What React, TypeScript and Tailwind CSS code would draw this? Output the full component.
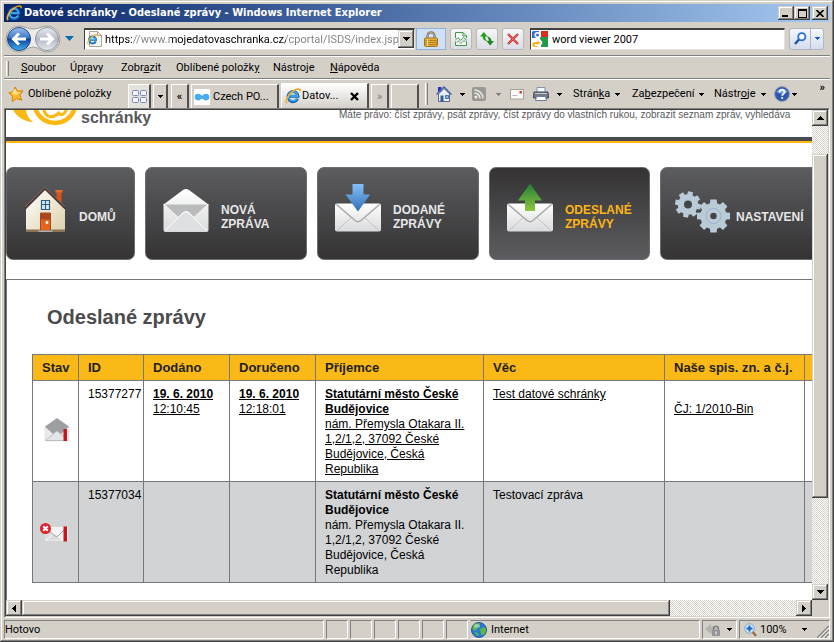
import React from "react";

const UI = "font-[Roboto,Tahoma,sans-serif] text-[11px] leading-[14px] text-black";
const RAISED =
  "bg-[#d4d0c8] shadow-[inset_-1px_-1px_#404040,inset_1px_1px_#d4d0c8,inset_-2px_-2px_#808080,inset_2px_2px_#fff]";
const TRACK =
  "bg-[repeating-conic-gradient(#fff_0_25%,#d4d0c8_0_50%)] bg-[length:2px_2px]";
const SUNKEN = "border border-t-[#808080] border-l-[#808080] border-r-white border-b-white";

/* ---------- icons ---------- */

function IeLogo({ className }: { className: string }) {
  return (
    <svg viewBox="0 0 16 16" className={className} aria-hidden="true">
      <path d="M12.6 10.6A5 5 0 1 1 13 8.3H4.6" fill="none" stroke="#1560b8" strokeWidth="3" />
      <path d="M12.2 10.4A4.6 4.6 0 1 1 12.7 8H5" fill="none" stroke="#43b4f0" strokeWidth="1.4" />
      <path d="M2.2 15.2C-.8 13 3.500 5.500 9 2.400 12.500.400 15.400.300 15.300 3.200" fill="none" stroke="#e8a010" strokeWidth="1.500" />
      <path d="M2 14.600C.500 12 4.500 5.800 9 3" fill="none" stroke="#ffe173" strokeWidth=".7" />
    </svg>
  );
}

function Caret({ color = "#000" }: { color?: string }) {
  return (
    <svg viewBox="0 0 5 3" className="h-[3px] w-[5px] shrink-0" aria-hidden="true" shapeRendering="crispEdges">
      <path d="M0 0h5v1H0zM1 1h3v1H1zM2 2h1v1H2z" fill={color} />
    </svg>
  );
}

function Arrow({ dir }: { dir: "up" | "down" | "left" | "right" }) {
  const d = {
    up: "M3 0h1v1h1v1h1v1h1v1H0V3h1V2h1V1h1z",
    down: "M0 0h7v1H6v1H5v1H4v1H3V3H2V2H1V1H0z",
    left: "M4 0v7H3V6H2V5H1V4H0V3h1V2h1V1h1V0z",
    right: "M0 0v7h1V6h1V5h1V4h1V3H3V2H2V1H1V0z",
  }[dir];
  const wide = dir === "up" || dir === "down";
  return (
    <svg
      viewBox={wide ? "0 0 7 4" : "0 0 4 7"}
      className={wide ? "h-[4px] w-[7px]" : "h-[7px] w-[4px]"}
      shapeRendering="crispEdges"
      aria-hidden="true"
    >
      <path d={d} />
    </svg>
  );
}

function BackForward() {
  return (
    <svg viewBox="0 0 56 28" className="h-[28px] w-[56px]" aria-hidden="true">
      <defs>
        <linearGradient id="bk" x1="0" y1="0" x2="0" y2="1">
          <stop offset="0" stopColor="#9cc0ea" />
          <stop offset=".45" stopColor="#3d78cb" />
          <stop offset=".5" stopColor="#0d3f9c" />
          <stop offset="1" stopColor="#3fb4f2" />
        </linearGradient>
        <linearGradient id="fw" x1="0" y1="0" x2="0" y2="1">
          <stop offset="0" stopColor="#e8ebf0" />
          <stop offset=".5" stopColor="#b4bac6" />
          <stop offset="1" stopColor="#e4e8ee" />
        </linearGradient>
      </defs>
      <path d="M14 1C20 1 22 4 28 4S36 1 42 1a13 13 0 0 1 0 26c-6 0-8-5-14-5s-8 5-14 5A13 13 0 0 1 14 1z" fill="#ecebe8" stroke="#a3a09a" />
      <circle cx="14" cy="14" r="11.500" fill="url(#bk)" stroke="#26477e" />
      <circle cx="42" cy="14" r="11.500" fill="url(#fw)" stroke="#8d939e" />
      <path d="M21 14H9.500M14 8.500 8.500 14l5.500 5.500" fill="none" stroke="#fff" strokeWidth="3" />
      <path d="M35 14h11.500M42 8.500l5.500 5.500-5.500 5.500" fill="none" stroke="#fff" strokeWidth="3" />
    </svg>
  );
}

function PageIe() {
  return (
    <span className="relative block h-4 w-[15px] shrink-0">
      <svg viewBox="0 0 15 16" className="h-4 w-[15px]" aria-hidden="true">
        <path d="M2.500.5h8l4 4v11h-12z" fill="#f7f5f0" stroke="#a8a497" />
        <path d="M10.500.5v4h4" fill="none" stroke="#a8a497" />
      </svg>
      <IeLogo className="absolute top-[3px] left-0 h-[11px] w-[11px]" />
    </span>
  );
}

function LockIcon() {
  return (
    <svg viewBox="0 0 14 16" className="h-4 w-[14px]" aria-hidden="true">
      <path d="M3.500 8V4.800a3.500 3.500 0 0 1 7 0V8" fill="none" stroke="#7d705a" strokeWidth="2.200" />
      <path d="M3.500 8V4.800a3.500 3.500 0 0 1 7 0V8" fill="none" stroke="#c9bfa6" strokeWidth=".7" />
      <rect x=".5" y="7" width="13" height="8.500" rx="1" fill="#e5ad3c" stroke="#a8741a" />
      <path d="M1 9.500h12M1 11.500h12M1 13.500h12" stroke="#b07a18" strokeWidth=".9" />
      <path d="M3.500 8v7" stroke="#f8dc8a" strokeWidth="1.200" />
    </svg>
  );
}

function CompatIcon() {
  return (
    <svg viewBox="0 0 12 14" className="h-[14px] w-3" fill="none" stroke="#3c9a47" aria-hidden="true">
      <path d="M.5 6V.5h7.500l3.500 3.500v2M.5 9.500v4h11v-4" fill="#fff" />
      <path d="M8 .5v3.500h3.500" />
      <path d="M0 8.500l3-3 2.500 3 3-3 3.500 3M1.500 10.500l2-1.500 2.500 2.500 3-3 2 2" strokeWidth=".9" />
    </svg>
  );
}

function RefreshIcon() {
  return (
    <svg viewBox="0 0 14 14" className="h-[14px] w-[14px]" aria-hidden="true" fill="#27a022">
      <path d="M3.800 0 7.600 4.500H5.300C5.300 7 6 8.200 7.500 9 4.500 9 2.700 7.500 2.600 4.500H0z" />
      <path d="M10.200 13.500 6.400 9h2.300C8.700 6.500 8 5.300 6.500 4.500c3 0 4.800 1.500 4.900 4.500H14z" fill="#1b8a1f" />
    </svg>
  );
}

function StopIcon() {
  return (
    <svg viewBox="0 0 12 12" className="h-3 w-3" aria-hidden="true">
      <path d="M1 1l10 10M11 1 1 11" stroke="#c93434" strokeWidth="2.400" />
      <path d="M1 1l10 10M11 1 1 11" stroke="#ef7a74" strokeWidth=".7" />
    </svg>
  );
}

function GoogleIcon() {
  return (
    <svg viewBox="0 0 16 16" className="h-4 w-4 shrink-0" aria-hidden="true">
      <rect width="16" height="16" rx="1" fill="#fff" />
      <path d="M1 0h6v7H0V1z" fill="#2f6fe0" />
      <path d="M9 0h7v6H9z" fill="#dd2c1c" />
      <path d="M8 6h8v10h-7z" fill="#1f9a48" />
      <path d="M0 12l7-2 1 3-2 3H1z" fill="#f2b32a" />
      <circle cx="5.500" cy="4" r="2.300" fill="#2f6fe0" stroke="#fff" strokeWidth="1.600" />
      <path d="M7 7.500c-1 1.800 3 2 2.500 4.500-.6 2.600-5 3-6.500 1.500" fill="none" stroke="#fff" strokeWidth="1.800" />
    </svg>
  );
}

function Magnifier() {
  return (
    <svg viewBox="0 0 13 13" className="h-[13px] w-[13px]" aria-hidden="true">
      <circle cx="7.800" cy="4.800" r="3.600" fill="#fff" stroke="#2b6fd6" strokeWidth="1.800" />
      <path d="M5 7.500 1 12" stroke="#1b4fb5" strokeWidth="2.400" />
    </svg>
  );
}

function StarIcon() {
  return (
    <svg viewBox="0 0 16 16" className="h-4 w-4 shrink-0" aria-hidden="true">
      <path d="M7 1l2.700 4.200 5.300-.4-3.200 4.200 1.900 5.200-5.200-1.700-4.200 3 .1-5.300L.8 6.800l5-1.300z" fill="#fdb92c" stroke="#d78208" />
      <path d="M7 2.800 9 6.300l3.500-.2L8 9 4 7z" fill="#ffe68a" />
    </svg>
  );
}

function QuickTabsIcon() {
  return (
    <svg viewBox="0 0 15 13" className="h-[13px] w-[15px]" aria-hidden="true" fill="#f2f4fb" stroke="#7f88ad">
      <rect x=".5" y=".5" width="6" height="5" rx="1" />
      <rect x="8.500" y=".5" width="6" height="5" rx="1" />
      <rect x=".5" y="7.500" width="6" height="5" rx="1" />
      <rect x="8.500" y="7.500" width="6" height="5" rx="1" />
    </svg>
  );
}

function DumbbellIcon() {
  return (
    <svg viewBox="0 0 16 16" className="h-4 w-4 shrink-0" aria-hidden="true">
      <path d="M0 0h16v16H0z" fill="#fff" />
      <path d="M4 4.800c2.500 0 2.500 1.700 4 1.700s1.500-1.700 4-1.700a3.300 3.300 0 0 1 0 6.600c-2.500 0-2.500-1.700-4-1.700s-1.500 1.700-4 1.700a3.300 3.300 0 0 1 0-6.600z" fill="#45aef2" />
    </svg>
  );
}

function HomeIcon() {
  return (
    <svg viewBox="0 0 16 16" className="h-4 w-4 shrink-0" aria-hidden="true">
      <path d="M2 1h3.500v5H2z" fill="#2a2fc4" />
      <path d="M2.500 8 8 2.500 13.500 8v7.500h-11z" fill="#e9eef8" stroke="#56698f" />
      <path d="M.5 8.500 8 1l7.500 7.500" fill="none" stroke="#4a6a9e" strokeWidth="1.500" />
      <path d="M4.500 9.500h3v6h-3z" fill="#2f5c9e" />
      <path d="M9.500 9.500h3v3h-3z" fill="#8db4e6" stroke="#2f5c9e" strokeWidth=".8" />
    </svg>
  );
}

function RssIcon() {
  return (
    <svg viewBox="0 0 14 14" className="h-[14px] w-[14px] shrink-0" aria-hidden="true">
      <rect width="14" height="14" rx="2" fill="#9b9993" />
      <circle cx="4" cy="10" r="1.500" fill="#efeeeb" />
      <path d="M2.500 6a5.500 5.500 0 0 1 5.500 5.500M2.500 3A8.500 8.500 0 0 1 11 11.500" fill="none" stroke="#efeeeb" strokeWidth="1.500" />
    </svg>
  );
}

function MailIcon() {
  return (
    <svg viewBox="0 0 14 11" className="h-[11px] w-[14px] shrink-0" aria-hidden="true">
      <rect x=".5" y=".5" width="13" height="9.500" fill="#fbfbfb" stroke="#a5a29c" />
      <path d="M9.500 2h2.500v2.500h-2.500z" fill="#d63a30" />
      <path d="M2.500 6.500h5" stroke="#b5b9c6" />
    </svg>
  );
}

function PrinterIcon() {
  return (
    <svg viewBox="0 0 16 16" className="h-4 w-4 shrink-0" aria-hidden="true">
      <path d="M4 1.500h8v5H4z" fill="#f4f7fd" stroke="#8493b3" />
      <path d="M1 6h14l.5 6h-15z" fill="#757b88" stroke="#3f444f" />
      <path d="M2 7.500h12" stroke="#c5cad6" />
      <path d="M3.500 10.500h9l1 4h-11z" fill="#fff" stroke="#6f7d9e" />
    </svg>
  );
}

function HelpIcon() {
  return (
    <svg viewBox="0 0 16 16" className="h-4 w-4 shrink-0" aria-hidden="true">
      <circle cx="8" cy="8" r="7.300" fill="#2c56b0" stroke="#7f8da8" />
      <path d="M2.500 6a6 6 0 0 1 11 0c-3 2-8 2-11 0z" fill="#7ea2e0" />
      <path d="M5.700 6.200c0-3 4.800-3 4.800 0 0 1.700-2.300 1.700-2.300 3.600M8.200 11v1.800" fill="none" stroke="#fff" strokeWidth="1.800" />
    </svg>
  );
}

function GlobeIcon() {
  return (
    <svg viewBox="0 0 16 16" className="h-4 w-4 shrink-0" aria-hidden="true">
      <circle cx="8" cy="8" r="7.500" fill="#2b78d0" stroke="#2a5594" />
      <path d="M2 4c2-3 5-3 7-2.500L8 4 5.500 5.500 6 8l-3 .5L1.500 7zM9 7l4-2 2 2v3l-3 3.500-2-1.500zM4 10l3 1 .5 3-2-.500z" fill="#58b947" />
      <ellipse cx="6" cy="4" rx="3" ry="2" fill="#fff" opacity=".4" />
    </svg>
  );
}

function HouseArt() {
  return (
    <svg viewBox="0 0 46 50" className="h-[50px] w-[46px]" aria-hidden="true">
      <defs>
        <linearGradient id="wall" x1="0" y1="0" x2="1" y2="1">
          <stop offset="0" stopColor="#fff" />
          <stop offset="1" stopColor="#ddd0aa" />
        </linearGradient>
      </defs>
      <path d="M32.500 7h5v13l-5-5z" fill="#d9541a" />
      <path d="M31.500 6h7v2.500h-7z" fill="#e86a2c" />
      <path d="M2 23 21.500 5 41 23v24H2z" fill="url(#wall)" />
      <path d="M2 45.500h39V48H2z" fill="#8a7654" />
      <path d="M1 24.500 21 4.500l20.500 20" fill="none" stroke="#4a3432" strokeWidth="2.400" />
      <path d="M1 23 21 3.300l20.500 19.700" fill="none" stroke="#8d7872" strokeWidth=".8" />
      <path d="M17.500 16.500h8v9h-8zM21.500 16.500v9M17.500 20.500h8" fill="#d8ecf8" stroke="#2f5d7c" strokeWidth="1.200" />
      <path d="M16.500 29h10v18h-10z" fill="#e2641d" stroke="#a84a18" />
      <path d="M17 29.500h9v6h-9z" fill="#a5481d" />
      <circle cx="23" cy="38.500" r="1.400" fill="#fff" />
      <path d="M14.500 46.500h14V48h-14z" fill="#a9b2b8" />
    </svg>
  );
}

function EnvelopeDefs({ id }: { id: string }) {
  return (
    <linearGradient id={id} x1="0" y1="0" x2="0" y2="1">
      <stop offset="0" stopColor="#fff" />
      <stop offset="1" stopColor="#d9dadb" />
    </linearGradient>
  );
}

function OpenEnvelopeArt() {
  return (
    <svg viewBox="0 0 46 50" className="h-[50px] w-[46px]" aria-hidden="true">
      <defs>
        <EnvelopeDefs id="oe" />
      </defs>
      <path d="M.5 20.500 20 6q3-2 6 0l19.500 14.500V46q0 2-2 2h-41q-2 0-2-2z" fill="url(#oe)" />
      <path d="M2 20.500h42L31 33l-5-5q-3-2-6 0l-5 5z" fill="#b9bbbd" />
      <path d="M2 46.500 20 29q3-2.500 6 0l18 17.500" fill="#dfe0e1" stroke="#fff" />
      <path d="M.5 20.500 15 33M45.500 20.500 31 33" stroke="#eee" />
    </svg>
  );
}

function ArrowEnvelopeArt({ up }: { up?: boolean }) {
  const arrow = up ? "ga" : "ba";
  const env = up ? "eu" : "ed";
  return (
    <svg viewBox="0 0 46 50" className="h-[50px] w-[46px]" aria-hidden="true">
      <defs>
        <EnvelopeDefs id={env} />
        <linearGradient id={arrow} x1="0" y1="0" x2="0" y2="1">
          <stop offset="0" stopColor={up ? "#237a34" : "#86c0fa"} />
          <stop offset="1" stopColor={up ? "#8cc63f" : "#2e6fb5"} />
        </linearGradient>
      </defs>
      <rect y="19.500" width="46" height="28" rx="2" fill={`url(#${env})`} />
      <path d="M2 46.500 17 33M44 46.500 29 33" stroke="#c0c1c3" />
      <path d="M1.500 20.500 20 36.500q3 2.500 6 0l18.500-16" fill="none" stroke="#a9abad" strokeWidth="1.600" />
      {up ? (
        <path d="M23-.5 35 16.500h-7v10.500H18V16.500h-7z" fill={`url(#${arrow})`} />
      ) : (
        <path d="M17.500 0h11v10.500H35L23 27.500 10.500 10.500h7z" fill={`url(#${arrow})`} />
      )}
    </svg>
  );
}

function gear(cx: number, cy: number, outer: number, inner: number, turn: number) {
  const pts: string[] = [];
  for (let i = 0; i < 8; i++) {
    const a = turn + (i * Math.PI) / 4;
    const steps: [number, number][] = [[-0.27, inner], [-0.19, outer], [0.19, outer], [0.27, inner]];
    steps.forEach(([da, r]) => {
      pts.push(`${(cx + r * Math.cos(a + da)).toFixed(1)},${(cy + r * Math.sin(a + da)).toFixed(1)}`);
    });
  }
  return pts.join(" ");
}

function GearsArt() {
  return (
    <svg viewBox="0 0 56 50" className="h-[50px] w-[56px]" aria-hidden="true">
      <polygon points={gear(13, 20.5, 13.2, 10.2, 0.2)} fill="#b8cbd7" />
      <circle cx="13" cy="20.500" r="4" fill="#454547" />
      <polygon points={gear(38.5, 32, 16.8, 13.2, 0)} fill="#b8cbd7" />
      <circle cx="38.500" cy="32" r="7.500" fill="none" stroke="#9fb3c1" strokeWidth="1" />
      <circle cx="38.500" cy="32" r="3.200" fill="#434345" />
    </svg>
  );
}

function StatusRead() {
  return (
    <svg viewBox="0 0 32 26" className="mx-auto mb-1 h-[26px] w-8" role="img" aria-label="Doručená">
      <path d="M5 11h24v14H5z" fill="#e9e9ea" stroke="#cfd0d2" strokeWidth=".5" />
      <path d="M5 10.500 17 2l12 8.500-8 7.500-4-3-4 3z" fill="#9d9fa2" />
      <path d="M5.500 24.500 17 15l8 6.500v3z" fill="#e4e5e6" stroke="#b4b6b8" strokeWidth=".8" />
      <path d="M23.500 13h3.500v12h-3.500z" fill="#c4161c" />
    </svg>
  );
}

function StatusFailed() {
  return (
    <svg viewBox="0 0 32 26" className="mx-auto h-[26px] w-8" role="img" aria-label="Nedoručitelná">
      <path d="M5 8h23v14H5z" fill="#f4f4f5" />
      <path d="M6 21.500 14 15l8 6.500zM5 9v12l8-6z" fill="#dcddde" />
      <path d="M6 9l9 8q1.500 1 3 0l8-8" fill="none" stroke="#a0a2a5" />
      <path d="M23.500 7.500H27v15h-3.500z" fill="#c4161c" />
      <circle cx="5.500" cy="9.500" r="5.500" fill="#e0202a" />
      <path d="M3.200 7.200l4.600 4.600M7.800 7.200l-4.600 4.600" stroke="#fff" strokeWidth="2" />
    </svg>
  );
}

/* ---------- browser chrome ---------- */

function TitleBar() {
  const btn = `flex h-[14px] w-4 items-center justify-center ${RAISED}`;
  return (
    <header className="flex h-[18px] shrink-0 items-center bg-linear-to-r from-[#0a246a] to-[#a6caf0] px-[2px]">
      <IeLogo className="h-4 w-4 shrink-0" />
      <h1 className="grow truncate pl-[2px] font-['DejaVu_Sans_Condensed','DejaVu_Sans',Tahoma,sans-serif] text-[11px] leading-[18px] font-bold text-white">
        Datové schránky - Odeslané zprávy - Windows Internet Explorer
      </h1>
      <button aria-label="Minimalizovat" className={btn}>
        <svg viewBox="0 0 8 8" className="h-2 w-2"><path d="M0 6h6v2H0z" /></svg>
      </button>
      <button aria-label="Maximalizovat" className={btn}>
        <svg viewBox="0 0 9 9" className="h-[9px] w-[9px]" shapeRendering="crispEdges"><path d="M0 0h9v9H0zM1 2v6h7V2z" fillRule="evenodd" /></svg>
      </button>
      <button aria-label="Zavřít" className={`ml-[2px] ${btn}`}>
        <svg viewBox="0 0 8 7" className="h-[7px] w-2"><path d="M.5 0 7.500 7M7.500 0 .5 7" stroke="#000" strokeWidth="1.600" /></svg>
      </button>
    </header>
  );
}

function NavBar() {
  const btn =
    "flex h-[22px] w-[22px] shrink-0 items-center justify-center rounded-[3px] border border-[#b9b8bd] bg-linear-to-b from-[#f7f7f9] to-[#dcdde6]";
  const field = "flex h-[22px] items-center border border-t-2 border-[#e6e3dc] border-t-[#404040] border-l-[#404040] bg-white";
  return (
    <div className="flex h-[33px] shrink-0 items-center pr-[6px] pl-px">
      <button aria-label="Zpět a vpřed" className="shrink-0"><BackForward /></button>
      <button aria-label="Poslední stránky" className="mr-[10px] ml-1 shrink-0">
        <svg viewBox="0 0 9 5" className="h-[5px] w-[9px]"><path d="M0 0h9L4.500 5z" fill="#0d6ba8" /></svg>
      </button>
      <div className={`${field} w-[331px] shrink-0 pl-[2px]`}>
        <PageIe />
        <input
          aria-label="Adresa"
          readOnly
          value="https://www.mojedatovaschranka.cz/cportal/ISDS/index.jsp"
          className="mt-px ml-[3px] min-w-0 grow bg-linear-[90deg,#000_27px,#808080_27px,#808080_65px,#000_65px,#000_181px,#808080_181px] bg-clip-text font-[Roboto,Tahoma,sans-serif] text-[11px] leading-[14px] text-transparent outline-none"
        />
        <button aria-label="Zobrazit adresy" className={`flex h-[18px] w-4 shrink-0 items-center justify-center ${RAISED}`}>
          <Arrow dir="down" />
        </button>
      </div>
      <button aria-label="Zpráva o zabezpečení" className="ml-px flex h-[22px] w-[30px] shrink-0 items-center justify-center border border-[#8fb0dc] bg-[#cfe0f9]">
        <LockIcon />
      </button>
      <div className="mr-[6px] ml-1 flex shrink-0 gap-1">
        <button aria-label="Kompatibilní zobrazení" className={btn}><CompatIcon /></button>
        <button aria-label="Aktualizovat" className={btn}><RefreshIcon /></button>
        <button aria-label="Zastavit" className={btn}><StopIcon /></button>
      </div>
      <div className={`${field} min-w-0 grow pl-px`}>
        <GoogleIcon />
        <input aria-label="Hledat" defaultValue="word viewer 2007" className={`mt-px ml-1 min-w-0 grow outline-none ${UI}`} />
      </div>
      <div className="ml-1 flex h-[22px] shrink-0 rounded-[3px] border border-[#b3b5c0] bg-linear-to-b from-[#f5f7fc] to-[#d3dcf0]">
        <button aria-label="Vyhledat" className="flex w-[21px] items-center justify-center border-r border-[#b3b5c0]"><Magnifier /></button>
        <button aria-label="Možnosti hledání" className="flex w-[12px] items-center justify-center"><Caret color="#1560d0" /></button>
      </div>
    </div>
  );
}

const MENU: [string, string, string, string][] = [
  ["", "S", "oubor", "w-[49px]"],
  ["Úp", "r", "avy", "w-[51px]"],
  ["Zobr", "a", "zit", "w-[55px]"],
  ["Oblíbené položk", "y", "", "w-[97px]"],
  ["Nástro", "j", "e", "w-[57px]"],
  ["", "N", "ápověda", "w-[57px]"],
];

function Grip({ className }: { className: string }) {
  return <span className={`w-[3px] shrink-0 border-r border-l border-l-white border-r-[#808080] ${className}`} />;
}

function MenuBar() {
  return (
    <nav aria-label="Nabídka" className="mb-px flex h-[24px] shrink-0 items-center border-t border-b border-t-[#808080] border-b-[#808080] pt-[2px] shadow-[inset_0_1px_#fff,0_1px_#fff]">
      <Grip className="mr-[12px] ml-[2px] h-[15px]" />
      {MENU.map(([a, key, b, w]) => (
        <button key={a + key} className={`${UI} ${w} shrink-0 text-left whitespace-nowrap`}>
          {a}<u>{key}</u>{b}
        </button>
      ))}
    </nav>
  );
}

const TAB = "flex shrink-0 items-center border-t border-l border-r-2 border-t-white border-l-white border-r-[#505050]";

function CommandBar() {
  return (
    <div className="flex h-[28px] shrink-0 items-stretch overflow-hidden">
      <button className={`${UI} flex w-[124px] shrink-0 items-center gap-1 pl-1 whitespace-nowrap`}>
        <StarIcon />
        Oblíbené položky
      </button>
      <div className="flex items-stretch gap-[2px] pt-1">
        <button aria-label="Rychlé karty" className={`${TAB} w-[23px] justify-center bg-[#e4e2dc]`}><QuickTabsIcon /></button>
        <button aria-label="Seznam karet" className={`${TAB} w-[15px] justify-center`}><Caret /></button>
        <button aria-label="Předchozí karty" className={`${TAB} ml-px w-[18px] justify-center ${UI} font-bold`}>«</button>
        <button className={`${TAB} w-[88px] gap-[3px] pl-[2px] ${UI} whitespace-nowrap`}>
          <DumbbellIcon />
          Czech PO...
        </button>
        <div className={`${TAB} -mt-px w-[88px] gap-px bg-linear-to-b from-white to-[#d4d0c8] pl-[3px]`}>
          <IeLogo className="h-4 w-4 shrink-0" />
          <button className={`${UI} grow text-left`}>Datov...</button>
          <button aria-label="Zavřít kartu" className="mr-2">
            <svg viewBox="0 0 9 9" className="h-[9px] w-[9px]"><path d="M1 1l7 7M8 1 1 8" stroke="#000" strokeWidth="2.400" /></svg>
          </button>
        </div>
        <button aria-label="Další karty" className={`${TAB} w-[18px] justify-center ${UI}`}><span className="text-[#808080]">»</span></button>
        <button aria-label="Nová karta" className={`${TAB} w-[28px]`} />
      </div>
      <div className="flex grow items-center">
        <Grip className="mr-2 ml-[6px] h-[22px]" />
        <button aria-label="Domů" className="flex w-[36px] shrink-0 items-center gap-[8px]"><HomeIcon /><Caret /></button>
        <button aria-label="Informační kanály" className="flex w-[38px] shrink-0 items-center gap-[10px]"><RssIcon /><Caret color="#808080" /></button>
        <button aria-label="Číst poštu" className="w-[23px] shrink-0"><MailIcon /></button>
        <button aria-label="Tisk" className="flex w-[40px] shrink-0 items-center gap-[8px]"><PrinterIcon /><Caret /></button>
        <button className={`${UI} flex w-[59px] shrink-0 items-center justify-between pr-[12px]`}><span>Strán<u>k</u>a</span><Caret /></button>
        <button className={`${UI} flex w-[82px] shrink-0 items-center justify-between pr-[10px]`}><span>Za<u>b</u>ezpečení</span><Caret /></button>
        <button className={`${UI} flex w-[60px] shrink-0 items-center justify-between pr-[8px]`}><span>Nástr<u>o</u>je</span><Caret /></button>
        <button aria-label="Nápověda" className="flex shrink-0 items-center gap-[2px]"><HelpIcon /><Caret /></button>
        <button aria-label="Další příkazy" className={`${UI} mr-[5px] mb-[13px] ml-auto font-bold`}>»</button>
      </div>
    </div>
  );
}

function VScroll() {
  const btn = `flex h-4 w-4 shrink-0 items-center justify-center ${RAISED}`;
  return (
    <div className={`flex w-4 shrink-0 flex-col ${TRACK}`}>
      <button aria-label="Nahoru" className={btn}><Arrow dir="up" /></button>
      <div className="grow-28 basis-0" />
      <div className={`grow-344 basis-0 ${RAISED}`} />
      <div className="grow-86 basis-0" />
      <button aria-label="Dolů" className={btn}><Arrow dir="down" /></button>
    </div>
  );
}

function HScroll() {
  const btn = `flex h-4 w-4 shrink-0 items-center justify-center ${RAISED}`;
  return (
    <div className="flex h-4 shrink-0">
      <div className={`flex grow ${TRACK}`}>
        <button aria-label="Vlevo" className={btn}><Arrow dir="left" /></button>
        <div className={`grow-648 basis-0 ${RAISED}`} />
        <div className="grow-126 basis-0" />
        <button aria-label="Vpravo" className={btn}><Arrow dir="right" /></button>
      </div>
      <div className="w-4 bg-[#d4d0c8]" />
    </div>
  );
}

function StatusBar() {
  return (
    <footer className={`${UI} flex h-[21px] shrink-0 items-stretch gap-[2px] pt-[2px]`}>
      <div className={`${SUNKEN} flex grow items-center`}>Hotovo</div>
      {[0, 1, 2, 3, 4, 5].map((i) => (
        <div key={i} className={`${SUNKEN} w-[22px] shrink-0`} />
      ))}
      <div className={`${SUNKEN} flex w-[230px] shrink-0 items-center gap-1 border-l-transparent`}>
        <GlobeIcon />
        Internet
      </div>
      <button aria-label="Chráněný režim" className={`${SUNKEN} flex w-[35px] shrink-0 items-center gap-[6px] pl-[2px]`}>
        <svg viewBox="0 0 16 14" className="h-[14px] w-4" aria-hidden="true">
          <path d="M0 6l6-5v3c3-2 6-1 8 1L8 9v-2L6 11z" fill="#b4b2ac" />
          <path d="M8.500 7V5.500a2.500 2.500 0 0 1 5 0V7" fill="none" stroke="#77757a" strokeWidth="1.200" />
          <path d="M7 7h8v6H7z" fill="#96949a" /><path d="M10.500 8.500h1v3h-1z" fill="#fff" />
        </svg>
        <Caret />
      </button>
      <div className={`${SUNKEN} flex w-[91px] shrink-0 items-center border-r-transparent pl-1`}>
        <button className="flex grow items-center gap-[3px]">
          <svg viewBox="0 0 13 14" className="h-[14px] w-[13px]" aria-hidden="true">
            <path d="M8 8l4 5" stroke="#9a6a3a" strokeWidth="2.200" />
            <circle cx="5.500" cy="5.500" r="4.700" fill="#d8ebfb" stroke="#7c9fc8" />
            <path d="M5.500 2.500v6M2.500 5.500h6" stroke="#1465c8" strokeWidth="2" />
          </svg>
          100%
          <span className="mr-[10px] ml-auto"><Caret /></span>
        </button>
        <svg viewBox="0 0 12 12" className="h-3 w-3 shrink-0 self-end" aria-hidden="true">
          <path d="M0 12 12 0M4 12l8-8M8 12l4-4" stroke="#808080" strokeWidth="1.500" />
          <path d="M1.500 12 12 1.500M5.500 12 12 5.500M9.500 12 12 9.500" stroke="#fff" strokeWidth=".8" />
        </svg>
      </div>
    </footer>
  );
}

/* ---------- web page ---------- */

type TileProps = { art: React.ReactNode; lines: string[]; active?: boolean; size: string };

function Tile({ art, lines, active, size }: TileProps) {
  return (
    <a
      href="#"
      className={`flex h-[93px] shrink-0 items-center rounded-[7px] border font-['Liberation_Sans',Arial,sans-serif] text-[12px] leading-[14px] font-bold ${size} ${
        active
          ? "border-[#6b6c6e] bg-linear-to-b from-[#353334] to-[#5c5d60] text-[#fdb515]"
          : "border-[#6b6c6e] bg-linear-to-b from-[#5c5d60] to-[#353334] text-[#e6e7e8]"
      }`}
    >
      <span className="mb-[9px] shrink-0">{art}</span>
      <span className="mt-[6px]">
        {lines.map((l) => (
          <span key={l} className="block">{l}</span>
        ))}
      </span>
    </a>
  );
}

function Recipient() {
  return (
    <>
      <b>Statutární město České Budějovice</b>
      <br />
      nám. Přemysla Otakara II. 1,2/1,2, 37092 České Budějovice, Česká Republika
    </>
  );
}

function Messages() {
  const cell = "border border-[#77787b] px-[9px] pt-[6px] pb-[4px]";
  return (
    <table className="ml-[25px] w-[833px] table-fixed border-collapse text-left text-[12px] leading-[15px] text-black">
      <colgroup>
        <col className="w-[46px]" />
        <col className="w-[65px]" />
        <col className="w-[86px]" />
        <col className="w-[86px]" />
        <col className="w-[168px]" />
        <col className="w-[181px]" />
        <col className="w-[140px]" />
        <col />
      </colgroup>
      <thead>
        <tr className="bg-[#fbb917] text-[13px] whitespace-nowrap text-[#231f20]">
          {["Stav", "ID", "Dodáno", "Doručeno", "Příjemce", "Věc", "Naše spis. zn. a č.j.", ""].map((h) => (
            <th key={h} className="border border-[#77787b] px-[9px] py-[5px]">{h}</th>
          ))}
        </tr>
      </thead>
      <tbody className="align-top">
        <tr>
          <td className="border border-[#77787b] align-middle"><StatusRead /></td>
          <td className={cell}>15377277</td>
          <td className={cell}><a href="#" className="underline"><b>19. 6. 2010</b><br />12:10:45</a></td>
          <td className={cell}><a href="#" className="underline"><b>19. 6. 2010</b><br />12:18:01</a></td>
          <td className={cell}><a href="#" className="underline"><Recipient /></a></td>
          <td className={cell}><a href="#" className="underline">Test datové schránky</a></td>
          <td className={cell}><a href="#" className="underline"><br />ČJ: 1/2010-Bin</a></td>
          <td className={cell} />
        </tr>
        <tr className="bg-[#d1d3d4]">
          <td className="border border-[#77787b] align-middle"><StatusFailed /></td>
          <td className={cell}>15377034</td>
          <td className={cell} />
          <td className={cell} />
          <td className={cell}><Recipient /></td>
          <td className={cell}>Testovací zpráva</td>
          <td className={cell} />
          <td className={cell} />
        </tr>
      </tbody>
    </table>
  );
}

function Page() {
  return (
    <main className="min-w-0 grow overflow-hidden bg-white font-['Liberation_Sans',Arial,sans-serif]">
      <div className="flex h-[27px] items-start">
        <svg viewBox="0 0 75 27" className="h-[27px] w-[75px] shrink-0" aria-hidden="true">
          <path d="M7 0c4 7 11 11.500 20 12-4-3-6.500-7-7-12z" fill="#fdb913" />
          <path d="M29.500-1c6 18.500 33 18.500 39 0" fill="none" stroke="#fdb913" strokeWidth="4.500" />
          <path d="M38-1c1 9 9 10 14.500 4 2 3 6 2 8-4" fill="none" stroke="#fdb913" strokeWidth="3" />
        </svg>
        <span className="text-[16px] leading-[16px] font-bold text-[#58595b]">schránky</span>
        <p className="ml-auto w-[473px] shrink-0 text-[10px] leading-[10px] whitespace-nowrap text-[#58595b]">
          Máte právo: číst zprávy, psát zprávy, číst zprávy do vlastních rukou, zobrazit seznam zpráv, vyhledáva
        </p>
      </div>
      <div className="h-[6px] border-b-2 border-[#fdb913] bg-[#4b4b4f]" />
      <nav aria-label="Hlavní" className="flex gap-[10px] pt-6 pb-[19px]">
        <Tile size="w-[129px] gap-[9px] pl-[17px]" art={<HouseArt />} lines={["DOMŮ"]} />
        <Tile size="w-[162px] gap-[12px] pl-[17px]" art={<OpenEnvelopeArt />} lines={["NOVÁ", "ZPRÁVA"]} />
        <Tile size="w-[162px] gap-[12px] pl-[17px]" art={<ArrowEnvelopeArt />} lines={["DODANÉ", "ZPRÁVY"]} />
        <Tile size="w-[161px] gap-[12px] pl-[17px]" art={<ArrowEnvelopeArt up />} lines={["ODESLANÉ", "ZPRÁVY"]} active />
        <Tile size="w-[162px] gap-[5px] pl-[14px]" art={<GearsArt />} lines={["NASTAVENÍ"]} />
      </nav>
      <section className="h-full border-t border-l border-[#77787b] pt-[25px]">
        <h2 className="mb-[25px] ml-[40px] text-[20px] leading-6 font-bold text-[#4b4b4d]">Odeslané zprávy</h2>
        <Messages />
      </section>
    </main>
  );
}

export default function App() {
  return (
    <div className="flex h-screen flex-col overflow-hidden bg-[#d4d0c8] px-1 pt-1 pb-[3px] shadow-[inset_-1px_-1px_#404040,inset_1px_1px_#d4d0c8,inset_-2px_-2px_#808080,inset_2px_2px_#fff]">
      <TitleBar />
      <NavBar />
      <MenuBar />
      <CommandBar />
      <div className="flex min-h-0 grow flex-col border border-t-[#808080] border-r-white border-b-white border-l-[#808080]">
        <div className="flex min-h-0 grow flex-col border border-t-[#404040] border-r-[#d4d0c8] border-b-[#d4d0c8] border-l-[#404040]">
          <div className="flex min-h-0 grow">
            <Page />
            <VScroll />
          </div>
          <HScroll />
        </div>
      </div>
      <StatusBar />
    </div>
  );
}
